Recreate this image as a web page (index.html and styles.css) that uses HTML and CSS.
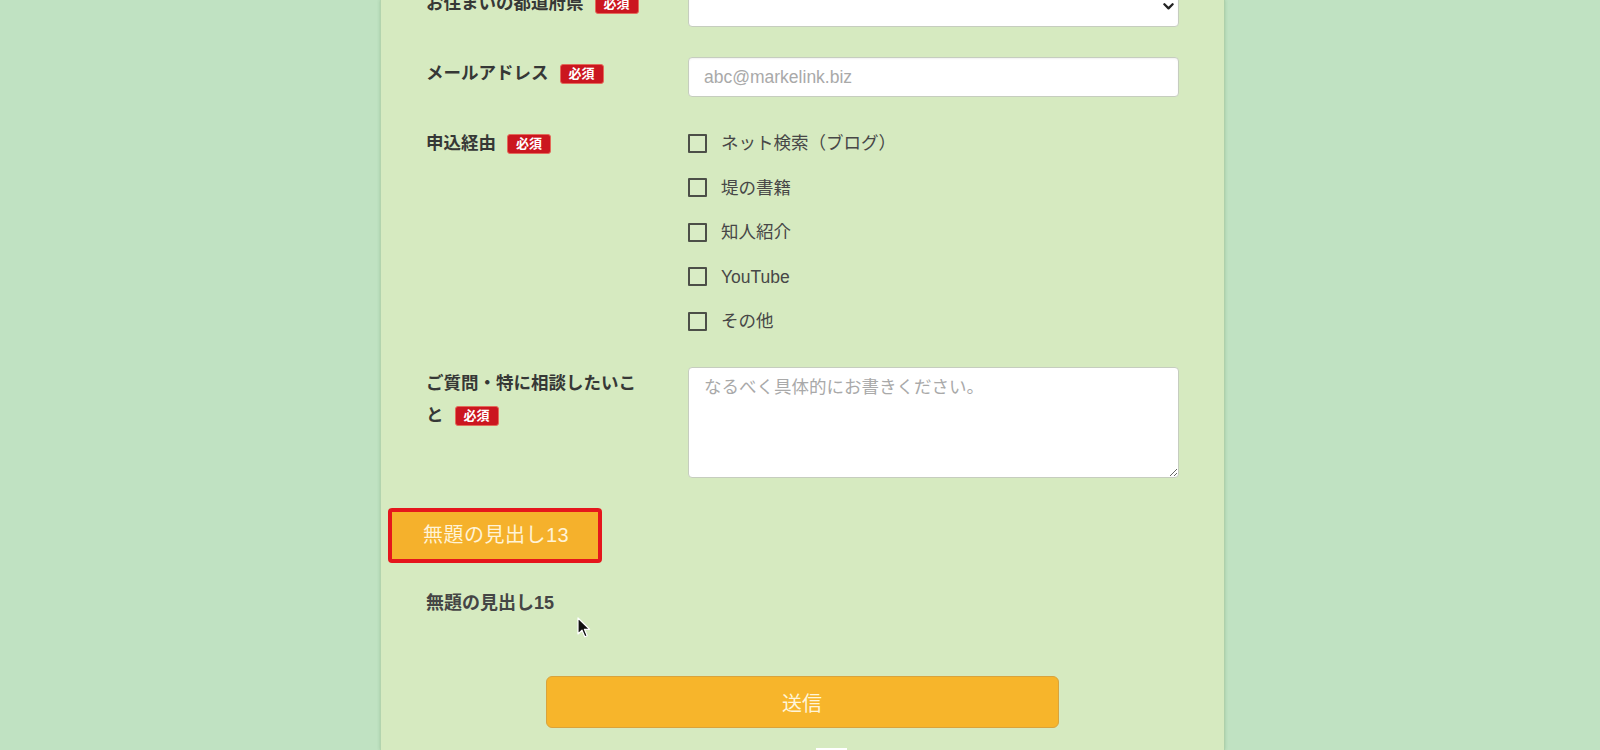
FILE: index.html
```html
<!DOCTYPE html>
<html lang="ja">
<head>
    <meta charset="UTF-8">
    <meta name="viewport" content="width=device-width, initial-scale=1.0">
    <title>お問い合わせ</title>
    <link rel="stylesheet" href="styles.css">
</head>
<body>
    <div class="panel">
        <form class="form">
            <div class="row">
                <div class="label">お住まいの都道府県<span class="req">必須</span></div>
                <div class="field select-wrap">
                    <select class="select">
                        <option value=""></option>
                    </select>
                    <svg class="chevron" width="11" height="7" viewBox="0 0 11 7"><path d="M1.4 1.3 L5.5 5.4 L9.6 1.3" fill="none" stroke="#222" stroke-width="2.3" stroke-linecap="round" stroke-linejoin="round"/></svg>
                </div>
            </div>

            <div class="row">
                <div class="label">メールアドレス<span class="req">必須</span></div>
                <div class="field">
                    <input class="input" type="text" placeholder="abc@markelink.biz">
                </div>
            </div>

            <div class="row">
                <div class="label">申込経由<span class="req">必須</span></div>
                <div class="field">
                    <ul class="checks">
                        <li><span class="box"></span><span class="txt">ネット検索（ブログ）</span></li>
                        <li><span class="box"></span><span class="txt">堤の書籍</span></li>
                        <li><span class="box"></span><span class="txt">知人紹介</span></li>
                        <li><span class="box"></span><span class="txt">YouTube</span></li>
                        <li><span class="box"></span><span class="txt">その他</span></li>
                    </ul>
                </div>
            </div>

            <div class="row">
                <div class="label">ご質問・特に相談したいこと<span class="req">必須</span></div>
                <div class="field">
                    <textarea class="textarea" placeholder="なるべく具体的にお書きください。"></textarea>
                </div>
            </div>

            <h2 class="heading13">無題の見出し13</h2>
        </form>

        <h3 class="heading15">無題の見出し15</h3>

        <div class="submit-wrap">
            <button class="submit" type="button">送信</button>
        </div>
        <div class="pagetop"></div>
    </div>

    <svg class="cursor" width="14" height="22" viewBox="0 0 14 22"><path d="M1 1 L1 17 L5 13.2 L7.8 19.8 L10.2 18.8 L7.4 12.3 L12.6 12.3 Z" fill="#111" stroke="#fff" stroke-width="1.2" stroke-linejoin="round"/></svg>
</body>
</html>
```

FILE: styles.css
```css
* {
    padding: 0;
    margin: 0;
    box-sizing: border-box;
}

body {
    height: 750px;
    overflow: hidden;
    position: relative;
    padding-left: 5px;
    background-color: #c0e2c2;
    font-family: "Liberation Sans", "Noto Sans CJK JP", sans-serif;
    color: #3b3b3b;
}

.panel {
    display: flow-root;
    width: 845px;
    height: 750px;
    margin: 0 auto;
    padding: 0 46px 0 45px;
    background-color: #d6eac0;
    border-left: 1px solid #b3d4ae;
    border-right: 1px solid #aed0ab;
    box-shadow: 0 0 3px rgba(60, 120, 70, .25);
}

/* 上にスクロールされた状態 */
.form {
    margin-top: -13px;
    display: flex;
    flex-direction: column;
    gap: 30px;
}

.row {
    display: grid;
    grid-template-columns: 220px 491px;
    column-gap: 42px;
    align-items: start;
}

.label {
    font-size: 17.5px;
    font-weight: 700;
    line-height: 32px;
    color: #363836;
}

.req {
    display: inline-block;
    width: 44px;
    height: 20px;
    margin-left: 11px;
    vertical-align: 1px;
    background-color: #cb161f;
    border: 1px solid #e46a5a;
    border-radius: 3px;
    color: #fff;
    font-size: 13px;
    font-weight: 700;
    line-height: 18px;
    text-align: center;
}

.select-wrap {
    position: relative;
}

.select,
.input {
    display: block;
    width: 100%;
    height: 40px;
    background-color: #fff;
    border: 1px solid #c6cdbf;
    border-radius: 4px;
    box-shadow: inset 0 1px 2px rgba(0, 0, 0, .06);
    font-family: inherit;
    font-size: 17.5px;
    color: #444;
    padding: 0 15px;
    outline: none;
}

.select {
    appearance: none;
}

.chevron {
    position: absolute;
    right: 5px;
    top: 16px;
}

.input::placeholder,
.textarea::placeholder {
    color: #a9a9a9;
}

.checks {
    list-style: none;
    display: flex;
    flex-direction: column;
    gap: 12.5px;
}

.checks li {
    display: flex;
    align-items: center;
    height: 32px;
    font-size: 17.5px;
    color: #474747;
}

.checks .txt {
    line-height: 32px;
}

.box {
    width: 19px;
    height: 19px;
    margin-right: 14px;
    border: 2px solid #4c4f48;
    border-radius: 1px;
    background-color: #d9ecc5;
}

.textarea {
    display: block;
    width: 100%;
    height: 111px;
    padding: 6px 15px;
    background-color: #fff;
    border: 1px solid #c6cdbf;
    border-radius: 4px;
    font-family: inherit;
    font-size: 17.5px;
    line-height: 26px;
    color: #444;
    resize: vertical;
    outline: none;
}

.heading13 {
    align-self: flex-start;
    margin-left: -38px;
    height: 55px;
    padding: 0 29px 0 31px;
    background-color: #f5b12c;
    border: 4px solid #e5161c;
    border-radius: 4px;
    color: #fff3d6;
    font-size: 20px;
    font-weight: 400;
    letter-spacing: 0.5px;
    line-height: 47px;
}

.heading15 {
    margin-top: 24px;
    font-size: 18px;
    font-weight: 700;
    line-height: 32px;
    color: #454545;
}

.submit-wrap {
    display: flex;
    justify-content: center;
    margin-top: 57px;
}

.submit {
    width: 513px;
    height: 52px;
    background-color: #f7b52b;
    border: 1px solid #d9a33c;
    border-radius: 6px;
    color: #fff5da;
    font-family: inherit;
    font-size: 20px;
    cursor: pointer;
}

.pagetop {
    width: 31px;
    height: 6px;
    margin: 20px 0 0 390px;
    background-color: #fff;
}

.cursor {
    position: absolute;
    left: 577px;
    top: 617px;
}
```
